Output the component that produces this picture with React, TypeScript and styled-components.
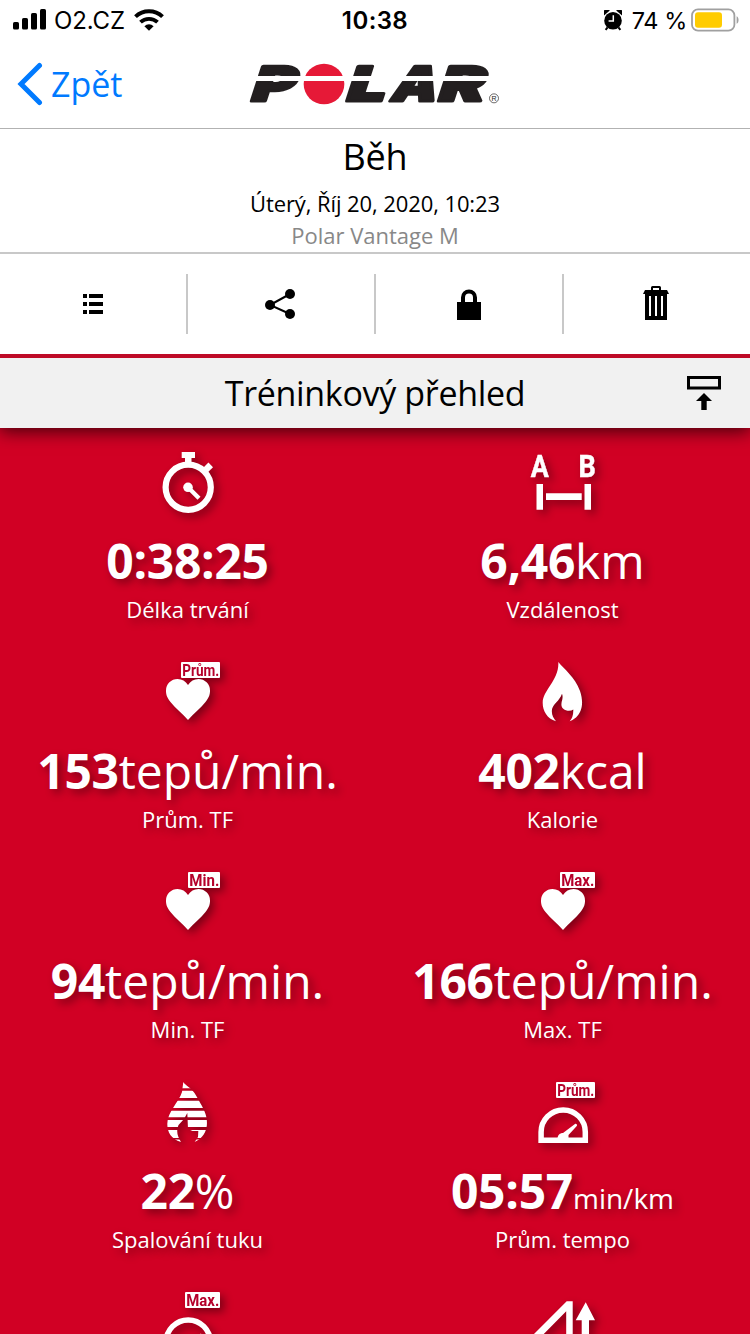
import React from 'react';
import styled, { createGlobalStyle } from 'styled-components';

const GlobalStyle = createGlobalStyle`
  * { box-sizing: border-box; }
  body { margin: 0; background: #fff; overflow: hidden; }
`;

const Screen = styled.div`
  width: 750px;
  height: 1334px;
  overflow: hidden;
  display: flex;
  flex-direction: column;
  font-family: 'Open Sans', 'Noto Sans', sans-serif;
  color: #000;
  background: #fff;
  svg { display: block; flex: none; }
`;

const StatusBar = styled.div`
  flex: none;
  height: 40px;
  display: grid;
  grid-template-columns: 1fr auto 1fr;
  align-items: center;
  padding: 0 11px 0 13px;
  font-family: Inter, sans-serif;
  font-size: 24px;
  line-height: 40px;
`;

const StatusGroup = styled.div<{ $end?: boolean }>`
  display: flex;
  align-items: center;
  justify-content: ${(p) => (p.$end ? 'flex-end' : 'flex-start')};
`;

const Carrier = styled.span`
  margin: 0 9px 0 8px;
  padding-top: 2px;
  font-size: 24px;
  letter-spacing: -0.1px;
  line-height: 38px;
`;

const Clock = styled.span`
  padding: 2px 2px 0 0;
  font-weight: 600;
  line-height: 38px;
  letter-spacing: 0.4px;
`;

const Charge = styled.span`
  margin: 0 4px 0 10px;
  padding-top: 2px;
  line-height: 38px;
  font-size: 23.5px;
  letter-spacing: -0.4px;
`;

const NavBar = styled.header`
  flex: none;
  height: 89px;
  border-bottom: 1px solid #b2b2b2;
  display: grid;
  grid-template-columns: 240px 270px 240px;
  align-items: start;
`;

const BackLink = styled.a`
  display: flex;
  align-items: center;
  gap: 8px;
  height: 88px;
  padding-left: 17px;
  color: #007aff;
  font-size: 34px;
  line-height: 48px;
`;

const LogoBox = styled.div`
  padding-top: 10px;
`;

const Summary = styled.section`
  flex: none;
  height: 125px;
  padding-top: 3px;
  border-bottom: 2px solid #c8c8c8;
  text-align: center;
`;

const Sport = styled.h1`
  margin: 0;
  font-size: 36px;
  font-weight: 400;
  line-height: 50px;
  letter-spacing: -0.2px;
`;

const StartTime = styled.div`
  margin-top: 5px;
  font-size: 22px;
  line-height: 32px;
  letter-spacing: -0.09px;
`;

const Device = styled.div`
  font-size: 22px;
  line-height: 32px;
  color: #888;
`;

const Toolbar = styled.nav`
  flex: none;
  display: flex;
  align-items: center;
  height: 104px;
  border-bottom: 4px solid #be0a26;
  position: relative;
  z-index: 2;
`;

const Tool = styled.div`
  width: 188px;
  height: 60px;
  display: flex;
  align-items: center;
  justify-content: center;
  border-right: 2px solid #c8c8c8;
  &:last-child { width: 186px; border-right: 0; padding: 0 2px 2px 0; }
`;

const SectionBar = styled.div`
  flex: none;
  position: relative;
  z-index: 1;
  height: 70px;
  display: grid;
  grid-template-columns: 1fr auto 1fr;
  align-items: center;
  padding: 0 27px;
  background: #f1f1f1;
  box-shadow: 0 4px 16px rgba(0, 0, 0, 0.65);
  clip-path: inset(0 0 -40px 0);
`;

const SectionTitle = styled.h2`
  grid-column: 2;
  margin: 0;
  font-size: 34px;
  font-weight: 400;
  line-height: 48px;
  letter-spacing: -0.33px;
`;

const CollapseSlot = styled.div`
  display: flex;
  justify-content: flex-end;
`;

const StatGrid = styled.main`
  flex: 1;
  min-height: 0;
  display: grid;
  grid-template-columns: 375px 375px;
  grid-auto-rows: 210px;
  padding-top: 24px;
  background: #d10024;
  color: #fff;
`;

const Stat = styled.div`
  display: flex;
  flex-direction: column;
  align-items: center;
  white-space: nowrap;
`;

const StatIcon = styled.svg`
  overflow: visible;
  filter: drop-shadow(4px 4px 4px rgba(0, 0, 0, 0.4));
`;

const Value = styled.div`
  height: 66px;
  margin-top: 12px;
  font-size: 48px;
  line-height: 66px;
  font-weight: 700;
  letter-spacing: -0.3px;
  text-shadow: 4px 4px 8px rgba(0, 0, 0, 0.4);
`;

const Unit = styled.span<{ $small?: boolean }>`
  font-weight: 400;
  font-size: ${(p) => (p.$small ? '28px' : '48px')};
  letter-spacing: 0;
  line-height: 1;
`;

const Label = styled.div`
  font-size: 22px;
  line-height: 30px;
  text-shadow: 4px 4px 8px rgba(0, 0, 0, 0.4);
`;

const RED = '#b5002a';

const Signal = () => (
  <svg width="33" height="22" viewBox="0 0 33 22">
    <rect x="0" y="13" width="6" height="7.500" rx="1.600" />
    <rect x="9" y="9" width="6" height="11.500" rx="1.600" />
    <rect x="18" y="4" width="6" height="16.500" rx="1.600" />
    <rect x="27" y="0" width="6" height="20.500" rx="1.600" />
  </svg>
);

const Wifi = () => (
  <svg width="30" height="22" viewBox="0 0 30 22" fill="none" stroke="#000">
    <path d="M1.500 7.600a19.500 19.500 0 0 1 27 0" strokeWidth="4" />
    <path d="M6.500 13.200a12.300 12.300 0 0 1 17 0" strokeWidth="3.800" />
    <path d="M10.400 17.200a6.700 6.700 0 0 1 9.200 0L15 21.800z" fill="#000" stroke="none" />
  </svg>
);

const Alarm = () => (
  <svg width="18" height="21" viewBox="0 0 18 21">
    <circle cx="9" cy="10.800" r="8.800" />
    <path d="M0 5.400A3.600 3.600 0 0 1 5.800.6zM12.200.6A3.600 3.600 0 0 1 18 5.400z" />
    <path d="M3.600 17.400 1.600 19.800M14.400 17.400l2 2.400" fill="none" stroke="#000" strokeWidth="2" />
    <path d="M9.300 5.200v5.800H4.600" fill="none" stroke="#fff" strokeWidth="1.500" />
  </svg>
);

const Battery = () => (
  <svg width="48" height="24" viewBox="0 0 48 24">
    <rect x="1" y="1.300" width="42.400" height="21.400" rx="6" fill="none" stroke="#a0a0a0" strokeWidth="1.800" />
    <rect x="4" y="4.300" width="27" height="15.400" rx="3" fill="#ffcc00" />
    <path d="M45.600 8.200c2.600.8 2.600 6.800 0 7.600z" fill="#a0a0a0" />
  </svg>
);

const Chevron = () => (
  <svg width="26" height="44" viewBox="0 0 26 44">
    <path d="M22.500 3.500 4 22l18.500 18.500" fill="none" stroke="#007aff" strokeWidth="5" strokeLinecap="round" strokeLinejoin="miter" />
  </svg>
);

const wordmark = {
  fontFamily: 'Inter',
  fontWeight: 900,
  fontSize: 143,
  lengthAdjust: 'spacingAndGlyphs',
} as const;

const Logo = () => (
  <svg width="270" height="65" viewBox="0 0 810 195">
    <g fill="#231f20" stroke="#231f20" strokeWidth="9" strokeLinejoin="round" transform="translate(0 153.500) skewX(-18)">
      <text {...wordmark} x="26" y="0" textLength="130">P</text>
      <text {...wordmark} x="312" y="0" textLength="116">L</text>
      <text {...wordmark} x="446" y="0" textLength="136">A</text>
      <text {...wordmark} x="587" y="0" textLength="136">R</text>
    </g>
    <circle cx="252" cy="102" r="61" fill="#e61937" />
    <rect x="20" y="78" width="730" height="15" fill="#fff" />
    <circle cx="762" cy="145" r="13.500" fill="none" stroke="#231f20" strokeWidth="2" />
    <text x="762" y="152.500" fontFamily="Liberation Sans" fontSize="21" textAnchor="middle" fill="#231f20">R</text>
  </svg>
);

const ListIcon = () => (
  <svg width="20" height="20" viewBox="0 0 20 20" shapeRendering="crispEdges">
    <path d="M0 0h4v4H0zM6 0h14v4H6zM0 8h4v4H0zM6 8h14v4H6zM0 16h4v4H0zM6 16h14v4H6z" />
  </svg>
);

const ShareIcon = () => (
  <svg width="32" height="30" viewBox="0 0 32 30">
    <path d="M25 5 5 16l20 9" fill="none" stroke="#000" strokeWidth="2" />
    <circle cx="25" cy="5" r="5" />
    <circle cx="5" cy="16" r="5" />
    <circle cx="25" cy="25" r="5" />
  </svg>
);

const LockIcon = () => (
  <svg width="24" height="32" viewBox="0 0 24 32">
    <path d="M0 14h24v18H0z" />
    <path d="M6 15V9.500a6 6 0 0 1 12 0V15" fill="none" stroke="#000" strokeWidth="4" />
  </svg>
);

const TrashIcon = () => (
  <svg width="26" height="34" viewBox="0 0 26 34">
    <path d="M9 5V1.500q0-.5.5-.5h7q.5 0 .5.500V5" fill="none" stroke="#000" strokeWidth="2" />
    <path d="M2 4h22l2 4h-2v26H2V8H0z" />
    <path d="M6 10h2v20H6zM12 10h2v20h-2zM18 10h2v20h-2z" fill="#fff" />
  </svg>
);

const CollapseIcon = () => (
  <svg width="36" height="36" viewBox="0 0 36 36">
    <rect x="1.500" y="2.500" width="31" height="10.500" fill="none" stroke="#000" strokeWidth="3" />
    <path d="M17 18l8 8h-5.300v9h-5.400v-9H9z" />
  </svg>
);

type GlyphName = 'watch' | 'distance' | 'heart' | 'flame' | 'fat' | 'gauge' | 'ascent';

const FLAME =
  'M33.300 0C39 7 50 15 55 29C59 41 57 50 51 55.500Q48 58 44.700 59.300Q48.500 55 48.300 47.500Q46.500 49 42.500 48.700C36 47.500 35.500 43 37.300 37.500Q38 34 37 31.700C34 39.500 29 41 27.200 46.500C26 51.500 28 55.500 31 59.300C22 56.500 17.700 49 17.700 41C17.700 28 34.500 18 33.300 0Z';

const DROP =
  'M33.300 0C35 3 41 6 44.500 11C48 17 53 25 55.500 32C59 43 56 52 49 57.500L44.700 60L48 55L48.300 49H42.500L38 47L37.300 31L34 37L28.500 43Q25 51 31 60C21 57 17.300 50 17.300 42C17.300 30 29 20 32 10Z';

const GLYPHS: Record<GlyphName, React.ReactNode> = {
  watch: (
    <>
      <circle cx="38.200" cy="35.300" r="22.600" fill="none" stroke="#fff" strokeWidth="6.200" />
      <path d="M31.700 0H45v6h-3.500v8h-6.500V6h-3.300z" />
      <rect x="54.300" y="11.500" width="6.500" height="9" transform="rotate(45 57.500 16)" />
      <circle cx="38" cy="35.300" r="4.800" />
      <path d="M38 35.300 49 46.300" stroke="#fff" strokeWidth="4.200" />
    </>
  ),
  distance: (
    <>
      <g fontFamily="Roboto" fontWeight="700" fontSize="31" stroke="#fff" strokeWidth=".5">
        <text x="5.700" y="25.300" textLength="18" lengthAdjust="spacingAndGlyphs">A</text>
        <text x="53.600" y="25.300" textLength="17.300" lengthAdjust="spacingAndGlyphs">B</text>
      </g>
      <path d="M11.500 32H18v25.700h-6.500zM59.500 32H66v25.700h-6.500zM21 41.300h35.700V48H21z" />
    </>
  ),
  heart: (
    <path d="M38 58C33 52 25 46 20.500 40C16.500 35 16 32 16 28.500A11.500 11.500 0 0 1 27.500 17C32 17 35.500 19 38 23C40.500 19 44 17 48.500 17A11.500 11.500 0 0 1 60 28.500C60 32 59.500 35 55.500 40C51 46 43 52 38 58Z" />
  ),
  flame: <path d={FLAME} />,
  fat: (
    <>
      <clipPath id="fat-bands">
        <path d="M0 0h75v6.300H0zM0 8.700h75V16H0zM0 18.700h75V26H0zM0 28.700h75v6.600H0zM0 38h75v7H0zM0 48h75v8H0zM0 57.500h75V61H0z" />
      </clipPath>
      <path d={DROP} clipPath="url(#fat-bands)" />
    </>
  ),
  gauge: (
    <>
      <path d="M16.100 58.300V50a22.100 22.100 0 0 1 44.200 0v8.300z" fill="none" stroke="#fff" strokeWidth="5.500" />
      <path d="M32.500 57c0-4 2.500-6 5.500-6l12.300-9.300q2-.2 1.700 2L43.500 53v4z" />
    </>
  ),
  ascent: (
    <>
      <path d="M41.700 9.300h6V60H-9zM41.200 19.300-1 62h42.200z" fillRule="evenodd" />
      <path d="M60.700 10.300 70 28.300h-6V60h-7.300V28.300h-6z" />
    </>
  ),
};

const BADGE_WIDTH: Record<string, number> = { 'Prům.': 39, 'Max.': 35, 'Min.': 32 };

const Badge = ({ text }: { text: string }) => {
  const width = BADGE_WIDTH[text];
  return (
    <>
      <rect x={70 - width} y="0" width={width} height="16" rx="1" />
      <text
        x={71.300 - width}
        y="14"
        fill={RED}
        fontFamily="Roboto"
        fontWeight="700"
        fontSize="16"
        textLength={width - 2}
        lengthAdjust="spacingAndGlyphs"
      >
        {text}
      </text>
    </>
  );
};

interface StatData {
  glyph: GlyphName;
  badge?: string;
  value: string;
  unit?: string;
  smallUnit?: boolean;
  label: string;
}

const STATS: StatData[] = [
  { glyph: 'watch', value: '0:38:25', label: 'Délka trvání' },
  { glyph: 'distance', value: '6,46', unit: 'km', label: 'Vzdálenost' },
  { glyph: 'heart', badge: 'Prům.', value: '153', unit: 'tepů/min.', label: 'Prům. TF' },
  { glyph: 'flame', value: '402', unit: 'kcal', label: 'Kalorie' },
  { glyph: 'heart', badge: 'Min.', value: '94', unit: 'tepů/min.', label: 'Min. TF' },
  { glyph: 'heart', badge: 'Max.', value: '166', unit: 'tepů/min.', label: 'Max. TF' },
  { glyph: 'fat', value: '22', unit: '%', label: 'Spalování tuku' },
  { glyph: 'gauge', badge: 'Prům.', value: '05:57', unit: 'min/km', smallUnit: true, label: 'Prům. tempo' },
  { glyph: 'gauge', badge: 'Max.', value: '', label: '' },
  { glyph: 'ascent', value: '', label: '' },
];

export default function App() {
  return (
    <Screen>
      <GlobalStyle />
      <StatusBar>
        <StatusGroup>
          <Signal />
          <Carrier>O2.CZ</Carrier>
          <Wifi />
        </StatusGroup>
        <Clock>10:38</Clock>
        <StatusGroup $end>
          <Alarm />
          <Charge>74 %</Charge>
          <Battery />
        </StatusGroup>
      </StatusBar>
      <NavBar>
        <BackLink>
          <Chevron />
          Zpět
        </BackLink>
        <LogoBox>
          <Logo />
        </LogoBox>
      </NavBar>
      <Summary>
        <Sport>Běh</Sport>
        <StartTime>Úterý, Říj 20, 2020, 10:23</StartTime>
        <Device>Polar Vantage M</Device>
      </Summary>
      <Toolbar>
        <Tool><ListIcon /></Tool>
        <Tool><ShareIcon /></Tool>
        <Tool><LockIcon /></Tool>
        <Tool><TrashIcon /></Tool>
      </Toolbar>
      <SectionBar>
        <SectionTitle>Tréninkový přehled</SectionTitle>
        <CollapseSlot>
          <CollapseIcon />
        </CollapseSlot>
      </SectionBar>
      <StatGrid>
        {STATS.map((s, i) => (
          <Stat key={i}>
            <StatIcon width="75" height="64" viewBox="0 0 75 64" fill="#fff">
              {GLYPHS[s.glyph]}
              {s.badge && <Badge text={s.badge} />}
            </StatIcon>
            {s.value && (
              <Value>
                {s.value}
                {s.unit && <Unit $small={s.smallUnit}>{s.unit}</Unit>}
              </Value>
            )}
            {s.label && <Label>{s.label}</Label>}
          </Stat>
        ))}
      </StatGrid>
    </Screen>
  );
}
